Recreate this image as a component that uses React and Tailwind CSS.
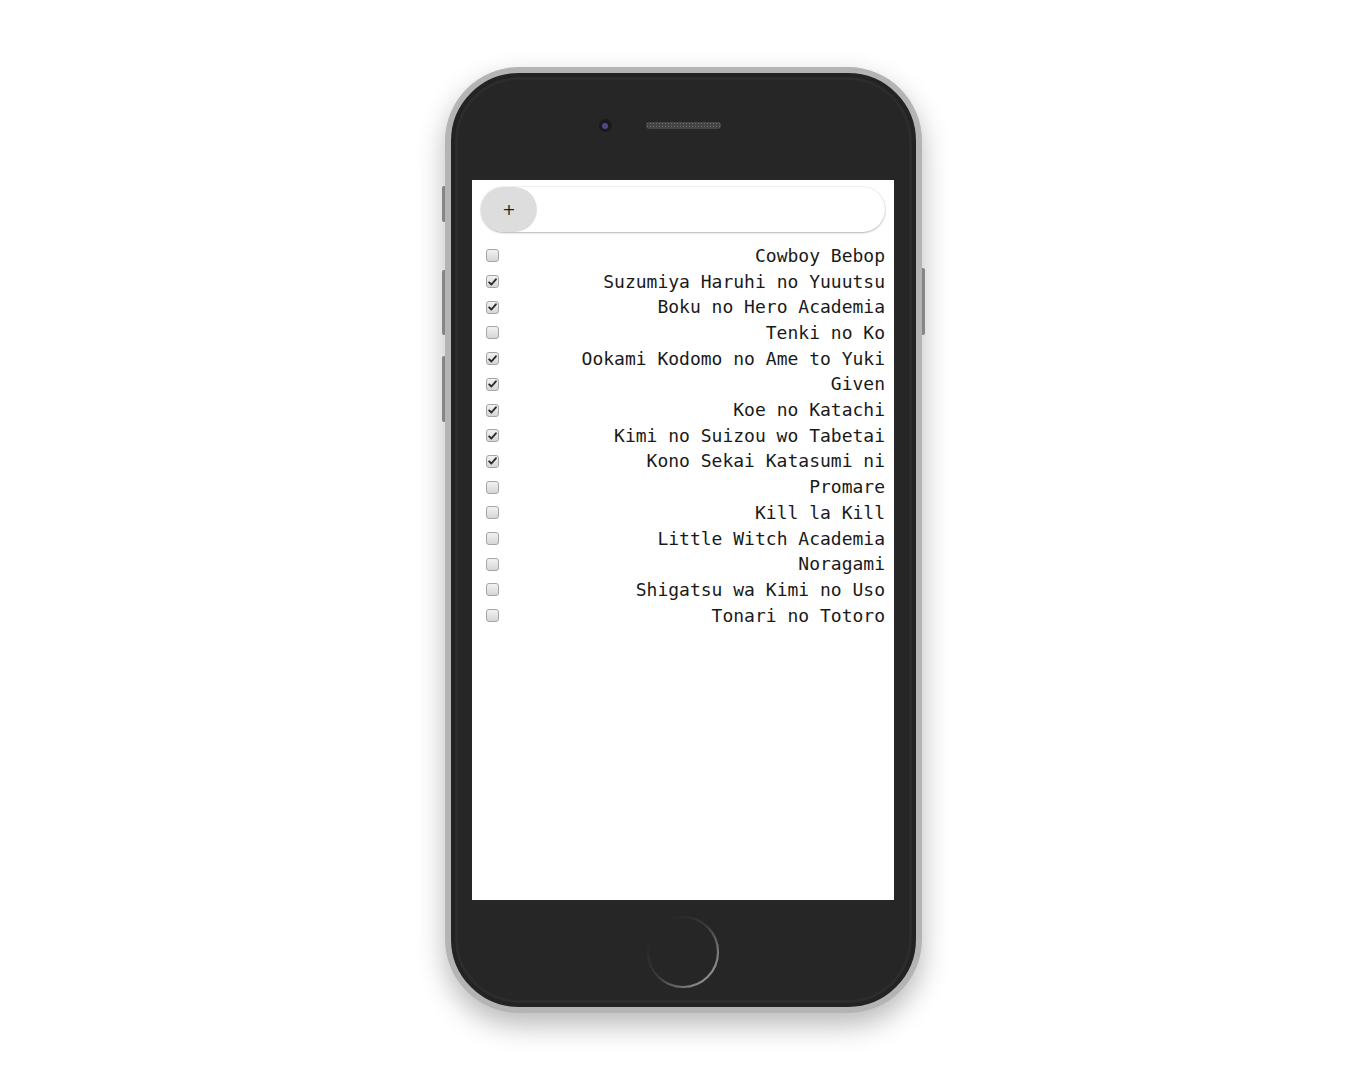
import React, { useState } from 'react';

const initialAnime = [
  { title: 'Cowboy Bebop', seen: false },
  { title: 'Suzumiya Haruhi no Yuuutsu', seen: true },
  { title: 'Boku no Hero Academia', seen: true },
  { title: 'Tenki no Ko', seen: false },
  { title: 'Ookami Kodomo no Ame to Yuki', seen: true },
  { title: 'Given', seen: true },
  { title: 'Koe no Katachi', seen: true },
  { title: 'Kimi no Suizou wo Tabetai', seen: true },
  { title: 'Kono Sekai Katasumi ni', seen: true },
  { title: 'Promare', seen: false },
  { title: 'Kill la Kill', seen: false },
  { title: 'Little Witch Academia', seen: false },
  { title: 'Noragami', seen: false },
  { title: 'Shigatsu wa Kimi no Uso', seen: false },
  { title: 'Tonari no Totoro', seen: false },
];

const CheckBox = ({ checked, onClick }) => (
  <button
    onClick={onClick}
    className="flex h-[13px] w-[13px] shrink-0 items-center justify-center rounded-[3px] border border-[#a5a5a5] bg-gradient-to-b from-[#f2f2f2] to-[#d6d6d6]"
  >
    {checked && (
      <svg width="9" height="8" viewBox="0 0 9 8">
        <path d="M1.2 4.4 L3.4 6.5 L7.9 1.3" fill="none" stroke="#2a2a2a" strokeWidth="1.9" strokeLinecap="round" strokeLinejoin="round" />
      </svg>
    )}
  </button>
);

const App = () => {
  const [anime, setAnime] = useState(initialAnime);
  const [text, setText] = useState('');

  const toggle = (i) => {
    setAnime(anime.map((a, idx) => (idx === i ? { ...a, seen: !a.seen } : a)));
  };

  const handleAdd = () => {
    if (!text.trim()) return;
    setAnime([...anime, { title: text.trim(), seen: false }]);
    setText('');
  };

  return (
    <div className="flex h-[1080px] w-full items-center justify-center bg-white">
      <div className="relative">
        {/* side buttons */}
        <div className="absolute left-[-3px] top-[119px] h-[36px] w-[4px] rounded-l-[2px] bg-[#9a9a9a]" />
        <div className="absolute left-[-3px] top-[203px] h-[65px] w-[4px] rounded-l-[2px] bg-[#9a9a9a]" />
        <div className="absolute left-[-3px] top-[289px] h-[66px] w-[4px] rounded-l-[2px] bg-[#9a9a9a]" />
        <div className="absolute right-[-3px] top-[201px] h-[67px] w-[4px] rounded-r-[2px] bg-[#9a9a9a]" />

        <div className="relative h-[946px] w-[477px] rounded-[74px] bg-[#b4b4b4] p-[6px] shadow-[0_12px_28px_rgba(0,0,0,0.28)]">
          <div className="flex h-full w-full flex-col items-center rounded-[68px] border-[4px] border-[#232323] bg-[#262626] shadow-[inset_0_0_0_3px_#2c2c2c]">
            {/* top: camera + speaker */}
            <div className="flex h-[103px] items-center pb-[6px]">
              <div className="flex h-[13px] w-[13px] items-center justify-center rounded-full bg-[#1a1a1e]">
                <div className="h-[6px] w-[6px] rounded-full bg-[#54458a]" />
              </div>
              <div className="ml-[34px] h-[7px] w-[75px] rounded-full bg-[#444] bg-[radial-gradient(#707070_1px,transparent_1px)] bg-[length:3px_3px]" />
              <div className="w-[47px]" />
            </div>

            {/* screen */}
            <div className="flex h-[720px] w-[422px] flex-col bg-white px-[9px] pt-[7px]">
              <div className="flex h-[45px] items-stretch rounded-full bg-white shadow-[0_1px_2px_rgba(0,0,0,0.25),0_0_0_1px_rgba(0,0,0,0.05)]">
                <button
                  onClick={handleAdd}
                  className="w-[56px] rounded-full bg-[#dddddd] text-[16px] text-[#222] font-['DejaVu_Sans',sans-serif]"
                >
                  +
                </button>
                <input
                  value={text}
                  onChange={(e) => setText(e.target.value)}
                  className="flex-1 bg-transparent px-3 text-[16px] outline-none font-['DejaVu_Sans_Mono',monospace]"
                />
              </div>

              <ul className="mt-[11px] font-['DejaVu_Sans_Mono',monospace] text-[18px] text-[#1a1a1a]">
                {anime.map((a, i) => (
                  <li key={a.title} className="flex h-[25.71px] items-center justify-between pl-[5px]">
                    <CheckBox checked={a.seen} onClick={() => toggle(i)} />
                    <span className="whitespace-nowrap leading-none">{a.title}</span>
                  </li>
                ))}
              </ul>
            </div>

            {/* bottom: home button */}
            <div className="flex flex-1 items-center justify-center">
              <svg width="76" height="76" viewBox="0 0 76 76">
                <defs>
                  <linearGradient id="homeRing" x1="0.15" y1="0.2" x2="0.85" y2="0.85">
                    <stop offset="0" stopColor="#262626" />
                    <stop offset="0.45" stopColor="#3a3a3a" />
                    <stop offset="1" stopColor="#8a8a8a" />
                  </linearGradient>
                </defs>
                <circle cx="38" cy="38" r="35" fill="none" stroke="url(#homeRing)" strokeWidth="2.2" />
              </svg>
            </div>
          </div>
        </div>
      </div>
    </div>
  );
};

export default App;
